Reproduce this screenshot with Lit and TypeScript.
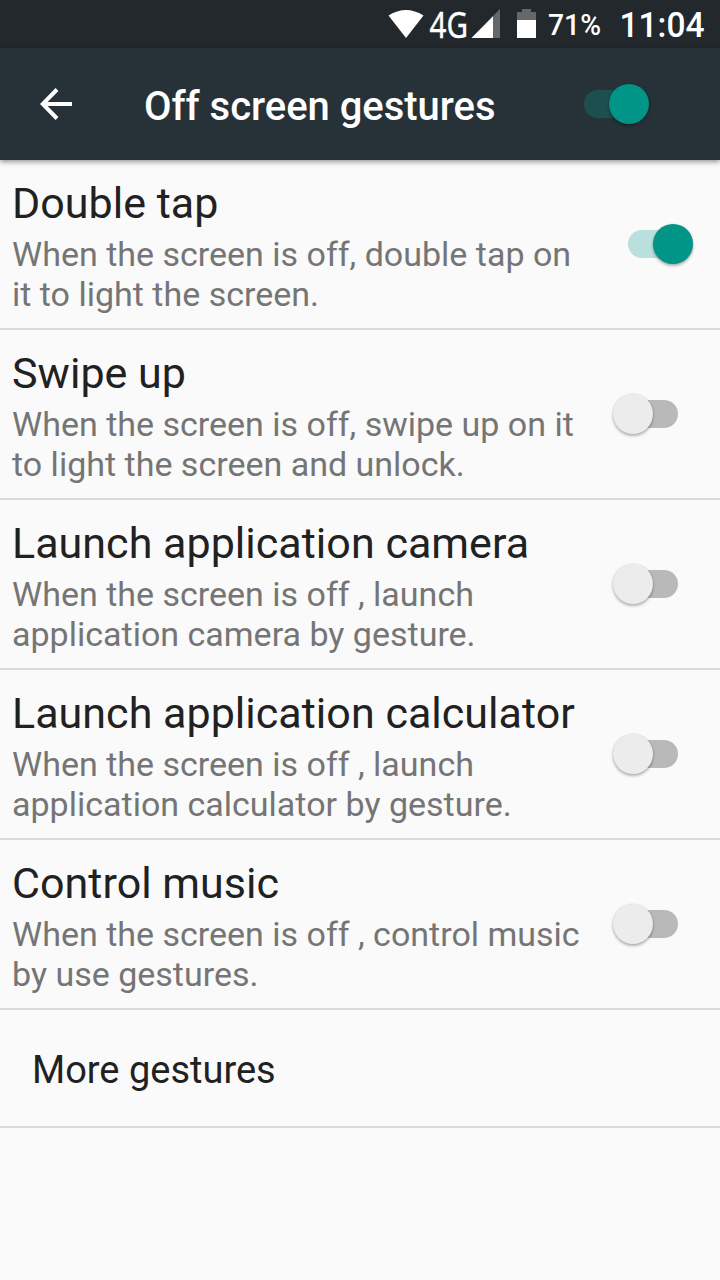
import { LitElement, html, css } from "lit";
import { customElement, property } from "lit/decorators.js";

@customElement("toggle-switch")
class ToggleSwitch extends LitElement {
  @property({ type: Boolean }) on = false;
  @property({ type: Boolean }) dark = false;
  static styles = css`
    :host { display: block; flex: none; }
    .switch { box-sizing: border-box; width: 66px; height: 42px; display: flex; align-items: center; }
    .track { width: 50px; height: 28px; border-radius: 14px; background: #b9b9b9; margin-left: 16px; flex: none; }
    .thumb { width: 40px; height: 40px; border-radius: 50%; background: #ececec; flex: none; margin-left: -65px;
      box-shadow: 0 2px 3px rgba(0,0,0,.28), 0 0 2px rgba(0,0,0,.14); }
    .on .track { background: #b9e0dd; margin-left: 0; }
    .on .thumb { background: #009587; margin-left: -25px; }
    .dark .track { background: #1d4e50; }
  `;
  render() {
    return html`<div class="switch ${this.on ? "on" : ""} ${this.dark ? "dark" : ""}"><div class="track"></div><div class="thumb"></div></div>`;
  }
}

@customElement("app-root")
class AppRoot extends LitElement {
  static styles = css`
    :host { display: block; width: 720px; height: 1280px; background: #fafafa; font-family: Roboto, sans-serif; color: #212121; overflow: hidden; }
    .status { height: 48px; background: #22282b; display: flex; justify-content: flex-end; color: #fff; }
    .status svg { display: block; }
    .bar { height: 112px; background: #263238; display: flex; align-items: center; box-shadow: 0 2px 5px rgba(0,0,0,.4); }
    .back { margin-left: 40px; width: 32px; height: 32px; }
    .title { margin-left: 72px; width: 440px; font-size: 40px; font-weight: 500; line-height: 48px; color: #fff; padding-top: 6px; white-space: nowrap; letter-spacing: -0.03px; }
    .row { box-sizing: border-box; height: 170px; border-bottom: 2px solid #dadada; display: flex; padding-left: 12px; }
    .text { width: 600px; padding-top: 17px; white-space: nowrap; }
    .name { font-size: 43px; line-height: 52px; letter-spacing: 0.03px; }
    .desc { font-size: 34px; line-height: 40px; color: #757575; padding-top: 5px; }
    toggle-switch.off { margin-top: 63px; }
    toggle-switch.act { margin: 63px 0 0 16px; }
    .more { box-sizing: border-box; height: 118px; border-bottom: 2px solid #dadada; padding: 37px 0 0 32px; font-size: 38px; line-height: 46px; }
  `;
  rows = [
    ["Double tap", "When the screen is off, double tap on", "it to light the screen.", true],
    ["Swipe up", "When the screen is off, swipe up on it", "to light the screen and unlock.", false],
    ["Launch application camera", "When the screen is off , launch", "application camera by gesture.", false],
    ["Launch application calculator", "When the screen is off , launch", "application calculator by gesture.", false],
    ["Control music", "When the screen is off , control music", "by use gestures.", false],
  ] as [string, string, string, boolean][];
  render() {
    return html`
      <div class="status">
        <svg width="340" height="48" viewBox="380 0 340 48" fill="#fff" font-family="Roboto, sans-serif">
          <path d="M388.500 15.500Q406 4.500 423.500 15.500L406 38Z"/>
          <text x="429.500" y="38" font-size="36" font-family="Noto Sans, sans-serif" stroke="#fff" stroke-width=".4" textLength="38.500" lengthAdjust="spacingAndGlyphs">4G</text>
          <path d="M500 9V38H471.500Z" opacity=".3"/><path d="M493 16.200V38H471.500Z"/>
          <path d="M517 12H522V9H531V12H536V38H517Z" opacity=".3"/><path d="M517 20H536V38H517Z"/>
          <text x="548" y="35" font-size="29.500" font-weight="500" textLength="53" lengthAdjust="spacingAndGlyphs">71%</text>
          <text x="619.500" y="37" font-size="35" font-weight="500" textLength="85" lengthAdjust="spacingAndGlyphs">11:04</text>
        </svg>
      </div>
      <div class="bar">
        <svg class="back" viewBox="0 0 32 32" fill="none" stroke="#fff" stroke-width="4"><path d="M32 16H4M17 1.500L2.800 16L17 30.500"/></svg>
        <div class="title">Off screen gestures</div>
        <toggle-switch on dark></toggle-switch>
      </div>
      ${this.rows.map(([n, a, b, on]) => html`<div class="row">
        <div class="text"><div class="name">${n}</div><div class="desc">${a}<br>${b}</div></div>
        <toggle-switch class=${on ? "act" : "off"} ?on=${on}></toggle-switch>
      </div>`)}
      <div class="more">More gestures</div>
    `;
  }
}
